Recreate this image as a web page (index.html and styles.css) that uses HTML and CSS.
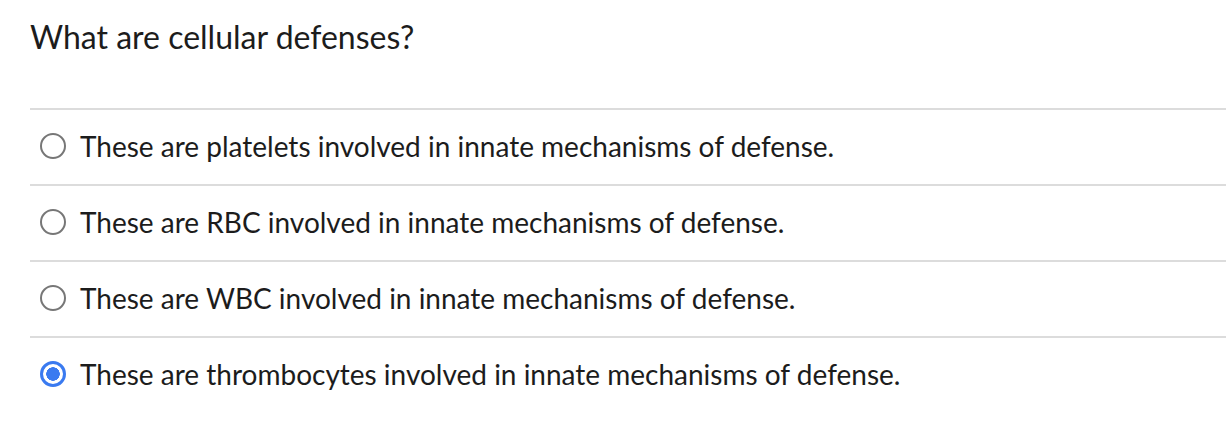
FILE: index.html
```html
<!DOCTYPE html>
<html>
<head>
<meta charset="utf-8">
<link rel="stylesheet" href="styles.css">
</head>
<body>
<div class="quiz">
  <h1 class="question">What are cellular defenses?</h1>
  <ul class="answers">
    <li class="answer"><span class="radio"></span><span class="label">These are platelets involved in innate mechanisms of defense.</span></li>
    <li class="answer"><span class="radio"></span><span class="label">These are RBC involved in innate mechanisms of defense.</span></li>
    <li class="answer"><span class="radio"></span><span class="label">These are WBC involved in innate mechanisms of defense.</span></li>
    <li class="answer"><span class="radio checked"></span><span class="label">These are thrombocytes involved in innate mechanisms of defense.</span></li>
  </ul>
</div>
</body>
</html>
```
FILE: styles.css
```css
html, body {
  margin: 0;
  padding: 0;
  background: #fff;
}
body {
  font-family: Lato, "Open Sans", sans-serif;
  color: #1c1c1c;
}
.quiz {
  padding: 15px 0 0 30px;
}
.question {
  margin: 0;
  font-size: 32px;
  font-weight: 400;
  line-height: 44px;
  height: 93px;
}
.answers {
  list-style: none;
  margin: 0;
  padding: 0;
}
.answer {
  display: flex;
  align-items: center;
  gap: 14px;
  height: 74px;
  border-top: 2px solid #dcdcdc;
  padding-left: 10px;
}
.radio {
  box-sizing: border-box;
  width: 26px;
  height: 26px;
  border-radius: 50%;
  border: 2px solid #777;
  flex: none;
  background: #fff;
  margin-top: -2px;
}
.radio.checked {
  border: 3px solid #3a7af0;
  background: radial-gradient(circle, #3a7af0 0 6.5px, #fff 7px);
}
.label {
  font-size: 28px;
  line-height: 34px;
  margin-top: -3px;
}
```
